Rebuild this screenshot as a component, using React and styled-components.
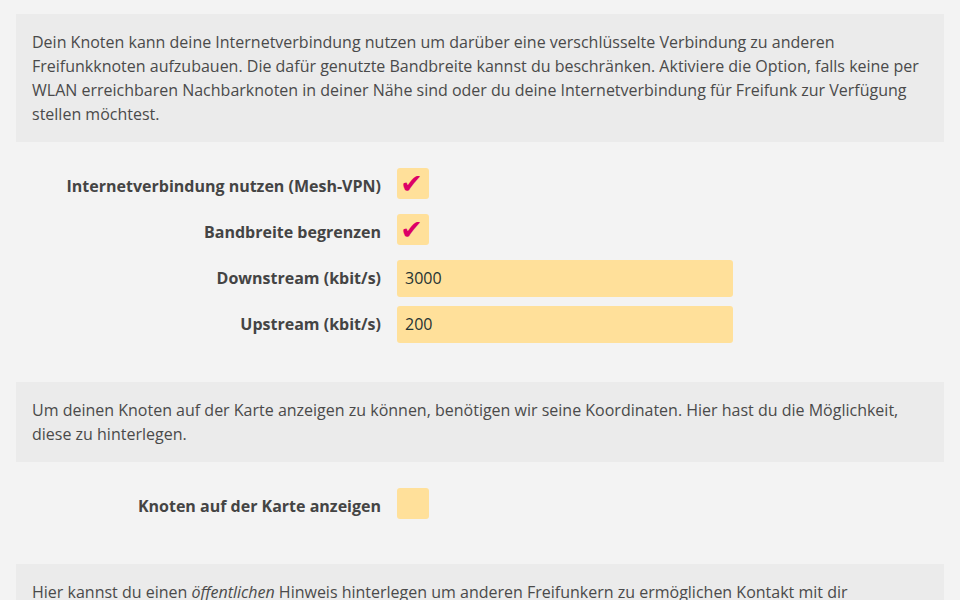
import React from 'react';
import styled, { createGlobalStyle } from 'styled-components';

const GlobalStyle = createGlobalStyle`
  html, body {
    margin: 0;
    padding: 0;
    background: #f3f3f3;
  }
  body {
    font-family: "Open Sans", "Noto Sans", sans-serif;
    font-size: 16px;
    color: #4a4a4a;
  }
`;

const Page = styled.div`
  padding: 14px 16px 0;
  height: 600px;
  overflow: hidden;
  box-sizing: border-box;
`;

const Info = styled.div`
  background: #ebebeb;
  padding: 16px;
  line-height: 24px;
  em { font-style: italic; }
`;

const Form = styled.div`
  padding: 26px 0 30px;
`;

const Row = styled.div`
  display: grid;
  grid-template-columns: 365px 336px;
  column-gap: 16px;
  align-items: start;
  height: 37px;
  margin-bottom: 9px;
`;

const Label = styled.label`
  text-align: right;
  font-weight: 700;
  color: #444;
  line-height: 24px;
  padding-top: 6px;
`;

const Check = styled.span`
  display: flex;
  align-items: center;
  justify-content: center;
  width: 32px;
  height: 31px;
  border-radius: 3px;
  background: #ffe09a;
  color: #dc0067;
  font-family: "DejaVu Sans", sans-serif;
  font-size: 27px;
  line-height: 1;
  padding: 0 3px 1px 0;
  box-sizing: border-box;
`;

const Input = styled.div`
  height: 37px;
  box-sizing: border-box;
  border-radius: 3px;
  background: #ffe09a;
  padding: 0 8px;
  line-height: 37px;
  color: #1f3333;
`;

const Field = ({ label, checked, value }) => (
  <Row>
    <Label>{label}</Label>
    {value !== undefined ? (
      <Input>{value}</Input>
    ) : (
      <Check>{checked ? '✔' : ''}</Check>
    )}
  </Row>
);

export default function App() {
  return (
    <>
      <GlobalStyle />
      <Page>
        <Info>
          Dein Knoten kann deine Internetverbindung nutzen um darüber eine verschlüsselte Verbindung zu anderen
          Freifunkknoten aufzubauen. Die dafür genutzte Bandbreite kannst du beschränken. Aktiviere die Option, falls keine per
          WLAN erreichbaren Nachbarknoten in deiner Nähe sind oder du deine Internetverbindung für Freifunk zur Verfügung
          stellen möchtest.
        </Info>
        <Form>
          <Field label="Internetverbindung nutzen (Mesh-VPN)" checked />
          <Field label="Bandbreite begrenzen" checked />
          <Field label="Downstream (kbit/s)" value="3000" />
          <Field label="Upstream (kbit/s)" value="200" />
        </Form>
        <Info>
          Um deinen Knoten auf der Karte anzeigen zu können, benötigen wir seine Koordinaten. Hier hast du die Möglichkeit,
          diese zu hinterlegen.
        </Info>
        <Form>
          <Field label="Knoten auf der Karte anzeigen" />
        </Form>
        <Info>
          Hier kannst du einen <em>öffentlichen</em> Hinweis hinterlegen um anderen Freifunkern zu ermöglichen Kontakt mit dir
          aufzunehmen. Bitte beachte, dass dieser Hinweis auch öffentlich im Internet, zusammen mit den Koordinaten deines
          Knotens, einsehbar sein wird.
        </Info>
      </Page>
    </>
  );
}
